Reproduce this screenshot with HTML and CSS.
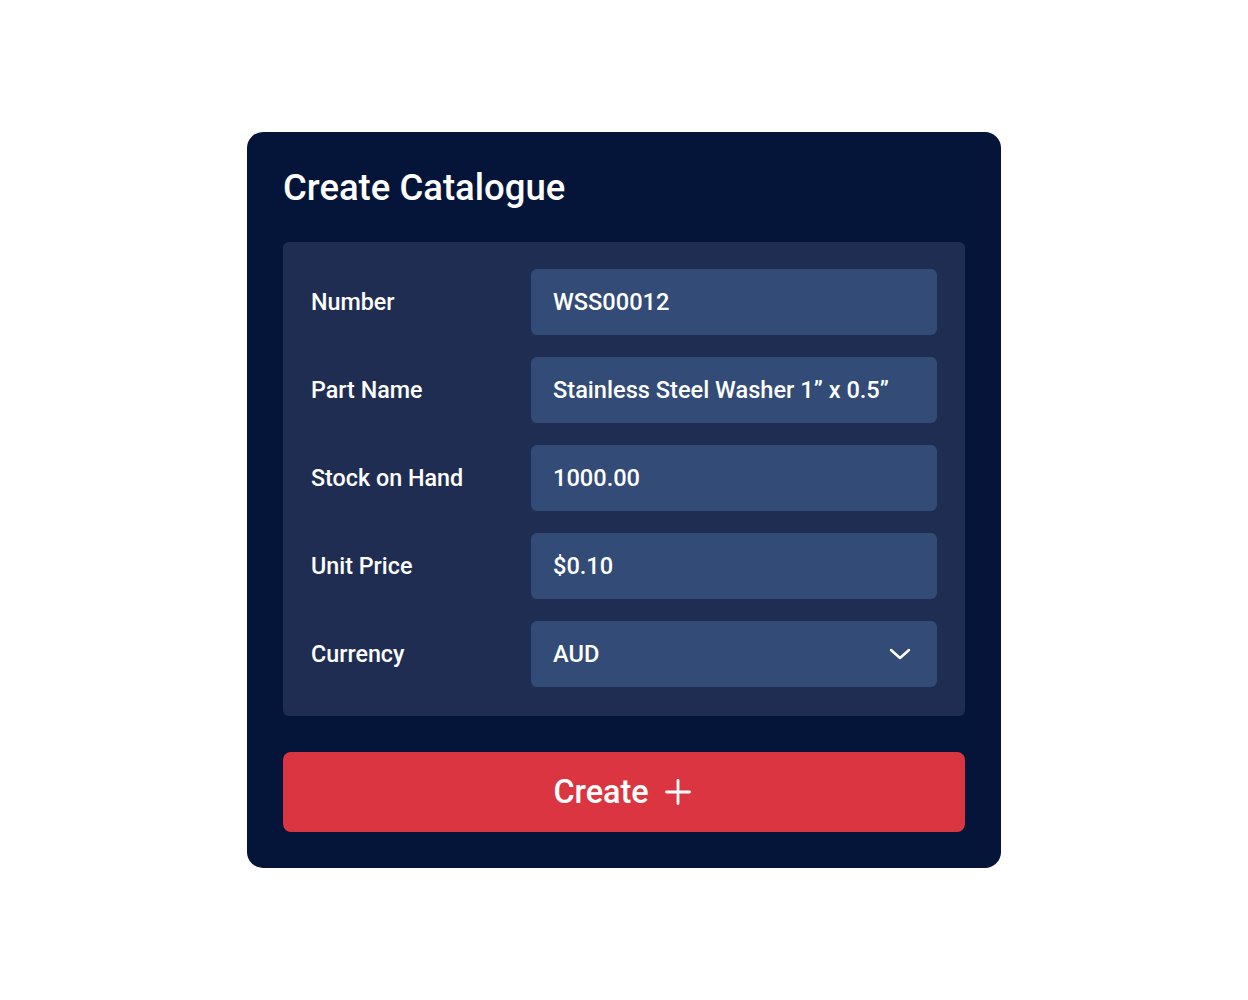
FILE: index.html
```html
<!DOCTYPE html>
<html lang="en">
<head>
<meta charset="utf-8">
<title>Create Catalogue</title>
<link rel="stylesheet" href="styles.css">
</head>
<body>
<main class="page">
  <section class="card">
    <h1 class="title">Create Catalogue</h1>
    <div class="panel">
      <div class="row">
        <label class="label">Number</label>
        <div class="field">WSS00012</div>
      </div>
      <div class="row">
        <label class="label">Part Name</label>
        <div class="field">Stainless Steel Washer 1” x 0.5”</div>
      </div>
      <div class="row">
        <label class="label">Stock on Hand</label>
        <div class="field">1000.00</div>
      </div>
      <div class="row">
        <label class="label">Unit Price</label>
        <div class="field">$0.10</div>
      </div>
      <div class="row">
        <label class="label">Currency</label>
        <div class="field select">
          <span>AUD</span>
          <svg class="chev" width="22" height="14" viewBox="0 0 22 14"><path d="M2 3 L11 11 L20 3" fill="none" stroke="#fff" stroke-width="2.5" stroke-linecap="round" stroke-linejoin="round"/></svg>
        </div>
      </div>
    </div>
    <button class="btn">
      <span>Create</span>
      <svg width="26" height="26" viewBox="0 0 26 26"><path d="M13 1.5 V24.5 M1.5 13 H24.5" stroke="#fff" stroke-width="2.8" stroke-linecap="round"/></svg>
    </button>
  </section>
</main>
</body>
</html>
```
FILE: styles.css
```css
* { box-sizing: border-box; }
html, body { margin: 0; padding: 0; background: #ffffff; }
body { font-family: Roboto, "Liberation Sans", sans-serif; }
.page {
  width: 1248px;
  height: 1000px;
  display: flex;
  justify-content: center;
  padding-top: 132px;
}
.card {
  width: 754px;
  height: 736px;
  background: #051439;
  border-radius: 16px;
  padding: 36px;
  display: flex;
  flex-direction: column;
}
.title {
  margin: 0;
  color: #ffffff;
  font-size: 36.5px;
  font-weight: 500;
  line-height: 40px;
  height: 74px;
}
.panel {
  background: #1f2d52;
  border-radius: 6px;
  padding: 27px 28px 29px 28px;
  display: flex;
  flex-direction: column;
  gap: 22px;
}
.row {
  display: flex;
  align-items: center;
  height: 66px;
}
.label {
  width: 220px;
  color: #ffffff;
  font-size: 23.3px;
  font-weight: 500;
}
.field {
  width: 406px;
  height: 66px;
  background: #324b77;
  border-radius: 6px;
  padding: 0 22px;
  display: flex;
  align-items: center;
  color: #ffffff;
  font-size: 23.6px;
  font-weight: 500;
}
.select { justify-content: space-between; padding-right: 26px; }
.btn {
  margin-top: 36px;
  height: 80px;
  border: 0;
  border-radius: 8px;
  background: #db3541;
  color: #ffffff;
  font-family: inherit;
  font-size: 32.4px;
  font-weight: 500;
  display: flex;
  align-items: center;
  justify-content: center;
  gap: 16px;
  padding: 0 4px 0 0;
}
```
